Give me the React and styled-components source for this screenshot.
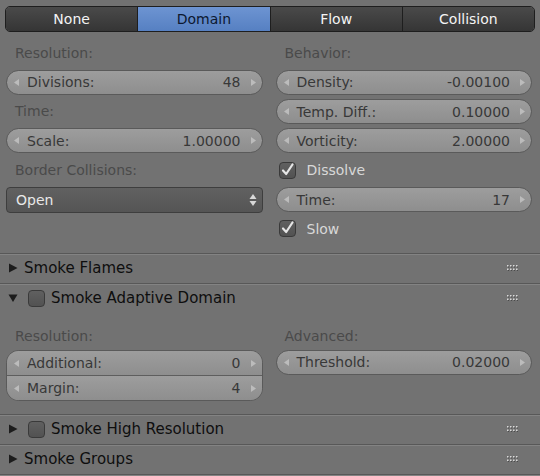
import React from 'react';
import styled, { createGlobalStyle } from 'styled-components';

const GlobalStyle = createGlobalStyle`
    html, body {
        margin: 0;
        padding: 0;
        background-color: #727272;
    }
    body {
        font-family: "DejaVu Sans", "Liberation Sans", sans-serif;
        font-size: 14px;
    }
`;

const Page = styled.div`
    width: 540px;
    height: 476px;
    overflow: hidden;
    background-color: #727272;
`;

const Tabs = styled.div`
    display: flex;
    height: 26px;
    margin: 6px 5px 0 5px;
    border: 1px solid #1e1e1e;
    border-radius: 5px;
    overflow: hidden;
    box-sizing: border-box;
`;

const Tab = styled.div`
    flex: 1;
    display: flex;
    align-items: center;
    justify-content: center;
    color: ${p => (p.$active ? '#0c1830' : '#f4f4f4')};
    background: ${p => (p.$active
        ? 'linear-gradient(#6d94d2, #5680c2)'
        : 'linear-gradient(#4a4a4a, #353535)')};
    border-left: ${p => (p.$first ? 'none' : '1px solid #1e1e1e')};
`;

const Body = styled.div`
    display: grid;
    grid-template-columns: 1fr 1fr;
    column-gap: 13px;
    padding: 8.5px 8px 11.5px 6px;
`;

const Column = styled.div`
    display: flex;
    flex-direction: column;
    gap: ${p => p.$gap || '4.33px'};
`;

const Label = styled.div`
    height: 25px;
    line-height: 25px;
    padding-left: 9px;
    color: #4a4a4a;
`;

const Field = styled.div`
    display: flex;
    align-items: center;
    height: 25px;
    box-sizing: border-box;
    padding: 0 6px 0 7px;
    color: #383838;
    background: linear-gradient(#9d9d9d, #8e8e8e);
    border: 1px solid #5a5a5a;
    border-radius: ${p => p.$radius || '12.5px'};
`;

const FieldGroup = styled.div`
    display: flex;
    flex-direction: column;
    border: 1px solid #5a5a5a;
    border-radius: 12.5px;
    overflow: hidden;

    ${Field} {
        border: none;
        border-radius: 0;
        height: 24.5px;
    }
    ${Field} + ${Field} {
        border-top: 1px solid #5e5e5e;
    }
`;

const FieldName = styled.span`
    flex: 1;
    margin-left: 8px;
`;

const FieldValue = styled.span`
    margin-right: 10px;
`;

const Arrow = ({ dir }) => (
    <svg width="5" height="7" viewBox="0 0 5 7">
        <polygon
            points={dir === 'left' ? '5,0 0,3.5 5,7' : '0,0 5,3.5 0,7'}
            fill="rgba(235,235,235,0.45)"
        />
    </svg>
);

const NumberField = ({ name, value }) => (
    <Field>
        <Arrow dir="left" />
        <FieldName>{name}</FieldName>
        <FieldValue>{value}</FieldValue>
        <Arrow dir="right" />
    </Field>
);

const Menu = styled.div`
    display: flex;
    align-items: center;
    justify-content: space-between;
    height: 26px;
    box-sizing: border-box;
    padding: 0 5px 0 9px;
    color: #e8e8e8;
    background: linear-gradient(#616161, #555555);
    border: 1px solid #3e3e3e;
    border-radius: 4px;
`;

const CheckRow = styled.div`
    display: flex;
    align-items: center;
    gap: 11px;
    height: 25px;
    padding-left: 3px;
    color: #d8d8d8;
`;

const Box = styled.div`
    width: 17px;
    height: 17px;
    box-sizing: border-box;
    border: 1px solid #3a3a3a;
    border-radius: 4px;
    background: linear-gradient(#606060, #525252);
    display: flex;
    align-items: center;
    justify-content: center;
    flex-shrink: 0;
`;

const CheckBox = ({ checked }) => (
    <Box>
        {checked && (
            <svg width="15" height="15" viewBox="0 0 15 15" style={{ overflow: 'visible' }}>
                <path d="M3 7.5 L6.2 11 L12.5 1.5" fill="none" stroke="#e6e6e6" strokeWidth="2.2" strokeLinecap="round" strokeLinejoin="round" />
            </svg>
        )}
    </Box>
);

const PanelHeader = styled.div`
    display: flex;
    align-items: center;
    height: 30px;
    box-sizing: border-box;
    padding: 0 22px 0 8px;
    border-top: 1px solid #585858;
    box-shadow: inset 0 1px 0 #838383;
    color: #0e0e0e;
    font-size: 15px;

    ${Box} {
        margin: 0 6px 0 10px;
    }
`;

const HeaderTitle = styled.span`
    flex: 1;
    margin-left: ${p => (p.$withBox ? '0' : '6px')};
`;

const PanelBody = styled.div`
    display: grid;
    grid-template-columns: 1fr 1fr;
    column-gap: 13px;
    padding: 11px 8px 13px 6px;
`;

const Footer = styled.div`
    border-top: 1px solid #585858;
    box-shadow: inset 0 1px 0 #838383;
    height: 4px;
`;

const Triangle = ({ open }) => (
    <svg width="10" height="10" viewBox="0 0 10 10">
        <polygon points={open ? '0.5,1.5 9.5,1.5 5,9' : '1,0.5 9.5,5 1,9.5'} fill="#1c1c1c" />
    </svg>
);

const Grip = () => (
    <svg width="11" height="6" viewBox="0 0 11 6">
        {[0, 3, 6, 9].map(x => (
            <g key={x}>
                <rect x={x} y="0" width="1.5" height="1.5" fill="#dadada" />
                <rect x={x} y="3.5" width="1.5" height="1.5" fill="#dadada" />
                <rect x={x + 1} y="1.5" width="1" height="1" fill="#4a4a4a" />
                <rect x={x + 1} y="5" width="1" height="1" fill="#4a4a4a" />
            </g>
        ))}
    </svg>
);

const MenuArrows = () => (
    <svg width="8" height="14" viewBox="0 0 8 14">
        <polygon points="0.5,6 7.5,6 4,1" fill="#d8d8d8" />
        <polygon points="0.5,8 7.5,8 4,13" fill="#d8d8d8" />
    </svg>
);

const App = () => {
    return (
        <>
            <GlobalStyle />
            <Page>
                <Tabs>
                    <Tab $first>None</Tab>
                    <Tab $active>Domain</Tab>
                    <Tab>Flow</Tab>
                    <Tab>Collision</Tab>
                </Tabs>

                <Body>
                    <Column>
                        <Label>Resolution:</Label>
                        <NumberField name="Divisions:" value="48" />
                        <Label>Time:</Label>
                        <NumberField name="Scale:" value="1.00000" />
                        <Label>Border Collisions:</Label>
                        <Menu>
                            <span>Open</span>
                            <MenuArrows />
                        </Menu>
                    </Column>
                    <Column>
                        <Label>Behavior:</Label>
                        <NumberField name="Density:" value="-0.00100" />
                        <NumberField name="Temp. Diff.:" value="0.10000" />
                        <NumberField name="Vorticity:" value="2.00000" />
                        <CheckRow>
                            <CheckBox checked />
                            <span>Dissolve</span>
                        </CheckRow>
                        <NumberField name="Time:" value="17" />
                        <CheckRow>
                            <CheckBox checked />
                            <span>Slow</span>
                        </CheckRow>
                    </Column>
                </Body>

                <PanelHeader>
                    <Triangle />
                    <HeaderTitle>Smoke Flames</HeaderTitle>
                    <Grip />
                </PanelHeader>
                <PanelHeader>
                    <Triangle open />
                    <CheckBox />
                    <HeaderTitle $withBox>Smoke Adaptive Domain</HeaderTitle>
                    <Grip />
                </PanelHeader>
                <PanelBody>
                    <Column $gap="1px">
                        <Label>Resolution:</Label>
                        <FieldGroup>
                            <NumberField name="Additional:" value="0" />
                            <NumberField name="Margin:" value="4" />
                        </FieldGroup>
                    </Column>
                    <Column $gap="1px">
                        <Label>Advanced:</Label>
                        <NumberField name="Threshold:" value="0.02000" />
                    </Column>
                </PanelBody>
                <PanelHeader>
                    <Triangle />
                    <CheckBox />
                    <HeaderTitle $withBox>Smoke High Resolution</HeaderTitle>
                    <Grip />
                </PanelHeader>
                <PanelHeader>
                    <Triangle />
                    <HeaderTitle>Smoke Groups</HeaderTitle>
                    <Grip />
                </PanelHeader>
                <Footer />
            </Page>
        </>
    );
};

export default App;
